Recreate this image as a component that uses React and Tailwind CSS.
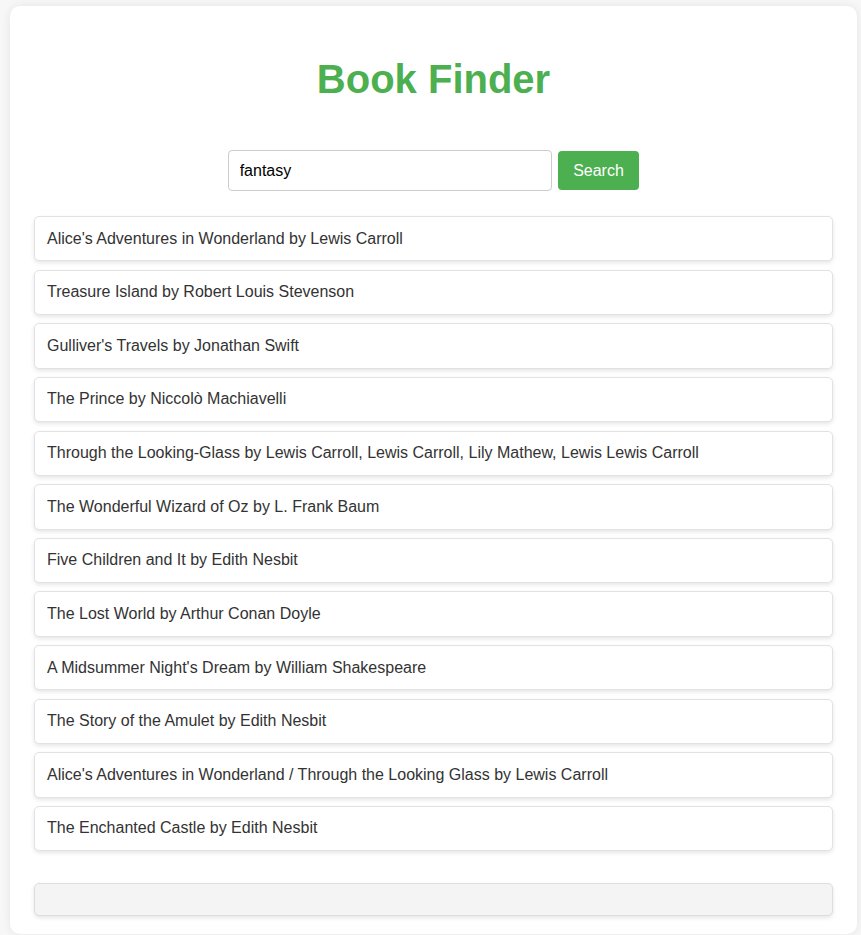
import React, { useState } from "react";

const books = [
  "Alice's Adventures in Wonderland by Lewis Carroll",
  "Treasure Island by Robert Louis Stevenson",
  "Gulliver's Travels by Jonathan Swift",
  "The Prince by Niccolò Machiavelli",
  "Through the Looking-Glass by Lewis Carroll, Lewis Carroll, Lily Mathew, Lewis Lewis Carroll",
  "The Wonderful Wizard of Oz by L. Frank Baum",
  "Five Children and It by Edith Nesbit",
  "The Lost World by Arthur Conan Doyle",
  "A Midsummer Night's Dream by William Shakespeare",
  "The Story of the Amulet by Edith Nesbit",
  "Alice's Adventures in Wonderland / Through the Looking Glass by Lewis Carroll",
  "The Enchanted Castle by Edith Nesbit",
];

export default function App() {
  const [query, setQuery] = useState("fantasy");

  return (
    <div className="min-h-[935px] bg-[#f7f7f7] pt-[6px] font-['Liberation_Sans',Arial,sans-serif]">
      <div className="ml-[10px] w-[847px] rounded-[10px] bg-white px-6 pb-[18px] pt-[50px] shadow-[0_0_10px_rgba(0,0,0,0.08)]">
        {/* header */}
        <h1 className="text-center text-[40px] font-bold leading-[46px] text-[#4caf50]">
          Book Finder
        </h1>

        {/* search form */}
        <form
          className="mt-[48px] flex items-center justify-center gap-[6px]"
          onSubmit={(e) => e.preventDefault()}
        >
          <input
            value={query}
            onChange={(e) => setQuery(e.target.value)}
            className="h-[41px] w-[324px] rounded-[4px] border border-[#ccc] px-[11px] text-[16px] text-black outline-none"
          />
          <button
            type="submit"
            className="h-[39px] rounded-[4px] bg-[#4caf50] px-[15.5px] text-[16px] text-white"
          >
            Search
          </button>
        </form>

        {/* results */}
        <ul className="mt-[25px] flex flex-col gap-[8.24px]">
          {books.map((book, i) => (
            <li
              key={i}
              className="h-[45.4px] rounded-[5px] border border-[#e2e2e2] bg-white px-3 pt-[12.5px] text-[16px] leading-[normal] text-[#333] shadow-[0_2px_4px_rgba(0,0,0,0.1)]"
            >
              {book}
            </li>
          ))}
        </ul>

        <div className="mt-[32px] h-[33px] rounded-[5px] border border-[#ddd] bg-[#f4f4f4] shadow-[0_2px_4px_rgba(0,0,0,0.1)]" />
      </div>
    </div>
  );
}
